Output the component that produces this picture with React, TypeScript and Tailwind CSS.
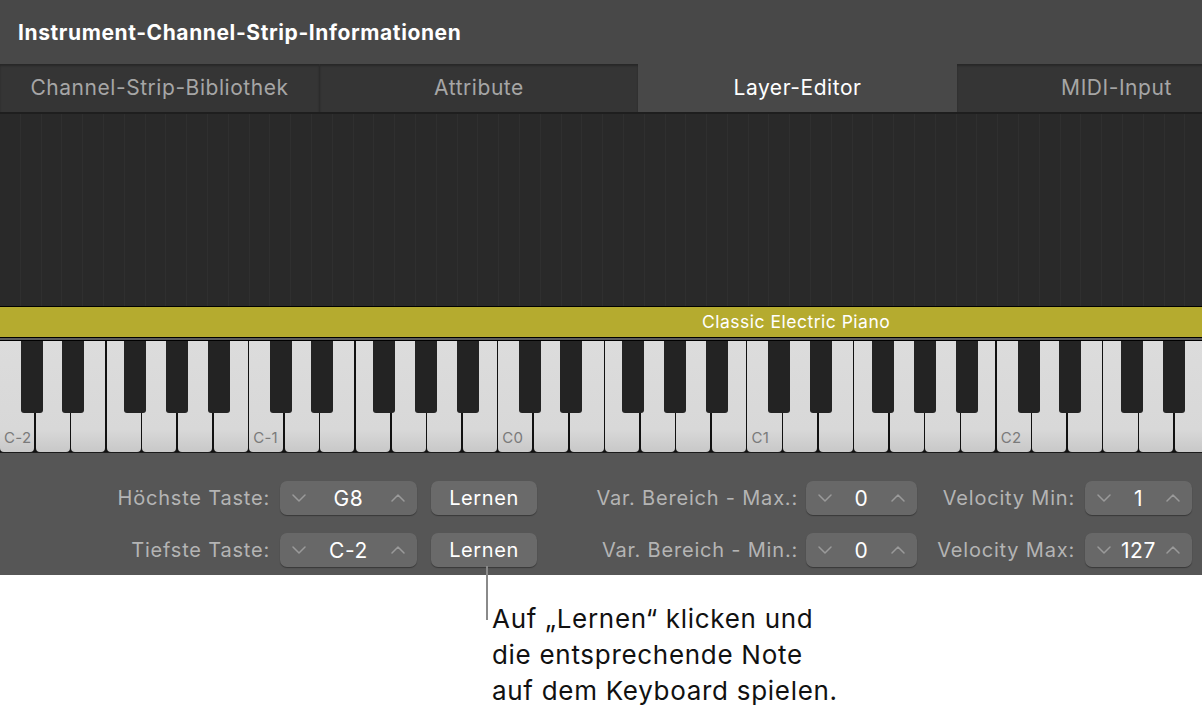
import React from 'react';

const tabs = [
  { label: 'Channel-Strip-Bibliothek', active: false },
  { label: 'Attribute', active: false },
  { label: 'Layer-Editor', active: true },
  { label: 'MIDI-Input', active: false },
];

const KEY_W = 35.6;
const WHITE_COUNT = 34;
// black key offsets inside one octave (px from the C key's left edge)
const BLACK_OFFSETS = [20.7, 62, 124, 166, 208];

const Chevron: React.FC<{ up?: boolean }> = ({ up }) => (
  <svg width="14" height="8" viewBox="0 0 14 8" fill="none" className="shrink-0">
    <path
      d={up ? 'M1 7 L7 1 L13 7' : 'M1 1 L7 7 L13 1'}
      stroke="#9a9a9a"
      strokeWidth="1.5"
      strokeLinecap="round"
      strokeLinejoin="round"
    />
  </svg>
);

const Stepper: React.FC<{ value: string; width: string }> = ({ value, width }) => (
  <div
    className={`${width} h-[34px] shrink-0 rounded-[7px] bg-[#686868] shadow-[0_1px_1px_rgba(0,0,0,0.35)] flex items-center justify-between px-[12px]`}
  >
    <Chevron />
    <span className="text-[21px] tracking-[0.6px] text-white leading-none">{value}</span>
    <Chevron up />
  </div>
);

const LearnButton: React.FC = () => (
  <div className="w-[106px] h-[34px] shrink-0 rounded-[7px] bg-[#6a6a6a] shadow-[0_1px_1px_rgba(0,0,0,0.35)] flex items-center justify-center text-[20px] tracking-[0.6px] text-white">
    Lernen
  </div>
);

const Label: React.FC<{ text: string; width: string }> = ({ text, width }) => (
  <div className={`${width} shrink-0 text-right text-[20px] tracking-[0.8px] text-[#b4b4b4] whitespace-nowrap`}>
    {text}
  </div>
);

const App: React.FC = () => {
  const whiteKeys = Array.from({ length: WHITE_COUNT }, (_, i) => i);
  const blackKeys: number[] = [];
  for (let o = 0; o < 5; o++) {
    BLACK_OFFSETS.forEach(off => {
      const x = o * KEY_W * 7 + off;
      if (x < 1202) blackKeys.push(x);
    });
  }

  return (
    <div
      className="relative w-[1202px] h-[710px] overflow-hidden bg-white flex flex-col"
      style={{ fontFamily: 'Inter, "Noto Sans", sans-serif' }}
    >
      {/* Titel */}
      <div className="h-[64px] shrink-0 bg-[#484848] flex items-center pl-[18px] pt-[2px]">
        <span className="text-[21px] font-bold text-white tracking-[0.6px]">
          Instrument-Channel-Strip-Informationen
        </span>
      </div>

      {/* Tabs */}
      <div className="h-[48px] shrink-0 flex bg-[#484848] overflow-hidden">
        {tabs.map((t, i) => (
          <div
            key={t.label}
            className={`w-[319px] shrink-0 flex items-center justify-center text-[21px] tracking-[0.55px] ${
              t.active
                ? 'bg-[#484848] text-white'
                : `bg-[#353535] text-[#a6a6a6] shadow-[inset_0_2px_2px_rgba(0,0,0,0.25)] ${i === 1 ? 'border-l border-[#2c2c2c]' : ''}`
            }`}
          >
            {t.label}
          </div>
        ))}
      </div>

      {/* Leere Layer-Fläche */}
      <div className="h-[194px] shrink-0 bg-[#292929] border-t-[2px] border-[#1e1e1e] flex overflow-hidden">
        {Array.from({ length: 58 }, (_, i) => (
          <div key={i} className="w-[20.8px] shrink-0 h-full border-r border-[#2f2f2f]" />
        ))}
      </div>

      {/* Layer-Balken */}
      <div className="h-[32px] shrink-0 bg-[#b5ab2f] border-y border-black flex items-center pl-[702px]">
        <span className="text-[17.5px] tracking-[0.5px] text-white whitespace-nowrap">Classic Electric Piano</span>
      </div>
      <div className="h-[2px] shrink-0 bg-[#5c5c5c]" />
      <div className="h-[1px] shrink-0 bg-black" />

      {/* Keyboard */}
      <div className="relative h-[111px] shrink-0 bg-[#111] flex overflow-hidden">
        {whiteKeys.map(i => (
          <div key={i} className="relative w-[35.6px] shrink-0 h-full pr-[1.5px]">
            <div className="h-full rounded-b-[4px] bg-[linear-gradient(to_bottom,#dcdcdc_0%,#d8d8d8_80%,#c8c8c8_100%)]">
              {i % 7 === 0 && (
                <span className="absolute left-[4px] bottom-[7px] text-[15px] tracking-[0.3px] text-[#7a7a7a] leading-none">
                  {`C${i / 7 - 2}`}
                </span>
              )}
            </div>
          </div>
        ))}
        {blackKeys.map(x => (
          <div
            key={x}
            className="absolute top-0 w-[22px] h-[72px] bg-[#232323] rounded-b-[3px]"
            style={{ left: x }}
          />
        ))}
      </div>

      {/* Parameter */}
      <div className="h-[123px] shrink-0 bg-[#565656] border-t border-[#1a1a1a] flex flex-col pt-[28px] gap-[18px]">
        <div className="flex items-center">
          <Label text="Höchste Taste:" width="w-[270px]" />
          <div className="ml-[10px]"><Stepper value="G8" width="w-[137px]" /></div>
          <div className="ml-[14px]"><LearnButton /></div>
          <Label text="Var. Bereich - Max.:" width="w-[261px]" />
          <div className="ml-[8px]"><Stepper value="0" width="w-[111px]" /></div>
          <Label text="Velocity Min:" width="w-[158px]" />
          <div className="ml-[10px]"><Stepper value="1" width="w-[107px]" /></div>
        </div>
        <div className="flex items-center">
          <Label text="Tiefste Taste:" width="w-[270px]" />
          <div className="ml-[10px]"><Stepper value="C-2" width="w-[137px]" /></div>
          <div className="ml-[14px]"><LearnButton /></div>
          <Label text="Var. Bereich - Min.:" width="w-[261px]" />
          <div className="ml-[8px]"><Stepper value="0" width="w-[111px]" /></div>
          <Label text="Velocity Max:" width="w-[158px]" />
          <div className="ml-[10px]"><Stepper value="127" width="w-[107px]" /></div>
        </div>
      </div>

      {/* Hinweis */}
      <div className="flex-1 pl-[492px] pt-[26px]">
        <p className="text-[26px] leading-[36px] tracking-[0.7px] text-[#111] whitespace-nowrap">
          Auf „Lernen“ klicken und
          <br />
          die entsprechende Note
          <br />
          auf dem Keyboard spielen.
        </p>
      </div>

      {/* Callout-Linie */}
      <div className="absolute left-[486px] top-[566px] w-[1.5px] h-[54px] bg-[#8a8a8a]" />
    </div>
  );
};

export default App;
